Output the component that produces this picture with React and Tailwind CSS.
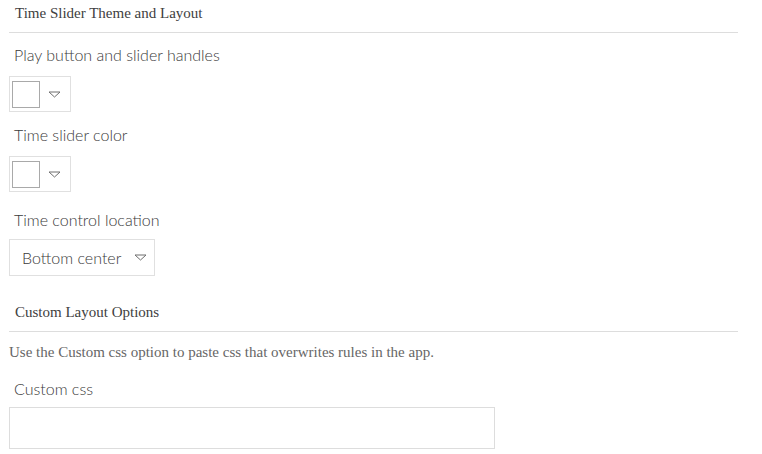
const sans = "font-['Lato','Noto_Sans',sans-serif] font-light";

function SectionHeader({ title, className = '' }) {
    return (
        <div className={`w-[729px] border-b border-[#dddddd] pl-[6px] pt-[4px] pb-[9px] ${className}`}>
            <h2 className="font-['Liberation_Serif',serif] text-[15px] leading-[19px] text-[#404040]">{title}</h2>
        </div>
    );
}

function Label({ children, className = '' }) {
    return (
        <div className={`${sans} pl-[5px] text-[16px] leading-[20px] text-[#3a3a3a] ${className}`}>{children}</div>
    );
}

function Caret() {
    return (
        <svg width="13" height="7" viewBox="0 0 13 7" className="block">
            <path d="M1 1 H12 L6.5 6 Z" fill="none" stroke="#6e6e6e" strokeWidth="1" />
        </svg>
    );
}

function ColorSwatch({ className = '' }) {
    return (
        <button className={`flex h-[36px] w-[62px] items-center border border-[#e0e0e0] bg-white ${className}`}>
            <span className="ml-[2px] h-[27px] w-[28px] border border-[#a9a9a9] bg-white" />
            <span className="ml-[8px]"><Caret /></span>
        </button>
    );
}

export default function App() {
    return (
        <div className="min-h-screen bg-white pl-[9px]">
            <SectionHeader title="Time Slider Theme and Layout" />

            <Label className="mt-[12px]">Play button and slider handles</Label>
            <ColorSwatch className="mt-[11px]" />

            <Label className="mt-[13px]">Time slider color</Label>
            <ColorSwatch className="mt-[11px]" />

            <Label className="mt-[18px]">Time control location</Label>
            <button className={`${sans} mt-[9px] flex h-[37px] w-[146px] items-center justify-between border border-[#e0e0e0] bg-white pl-[12px] pr-[7px] text-[16px] text-[#3a3a3a]`}>
                <span>Bottom center</span>
                <Caret />
            </button>

            <SectionHeader title="Custom Layout Options" className="mt-[23px]" />

            <p className="mt-[11px] font-['Liberation_Serif',serif] text-[15px] leading-[19px] text-[#666666]">
                Use the Custom css option to paste css that overwrites rules in the app.
            </p>

            <Label className="mt-[17px]">Custom css</Label>
            <textarea className="mt-[8px] block h-[42px] w-[486px] resize-none border border-[#dddddd] bg-white outline-none" />
        </div>
    );
}
